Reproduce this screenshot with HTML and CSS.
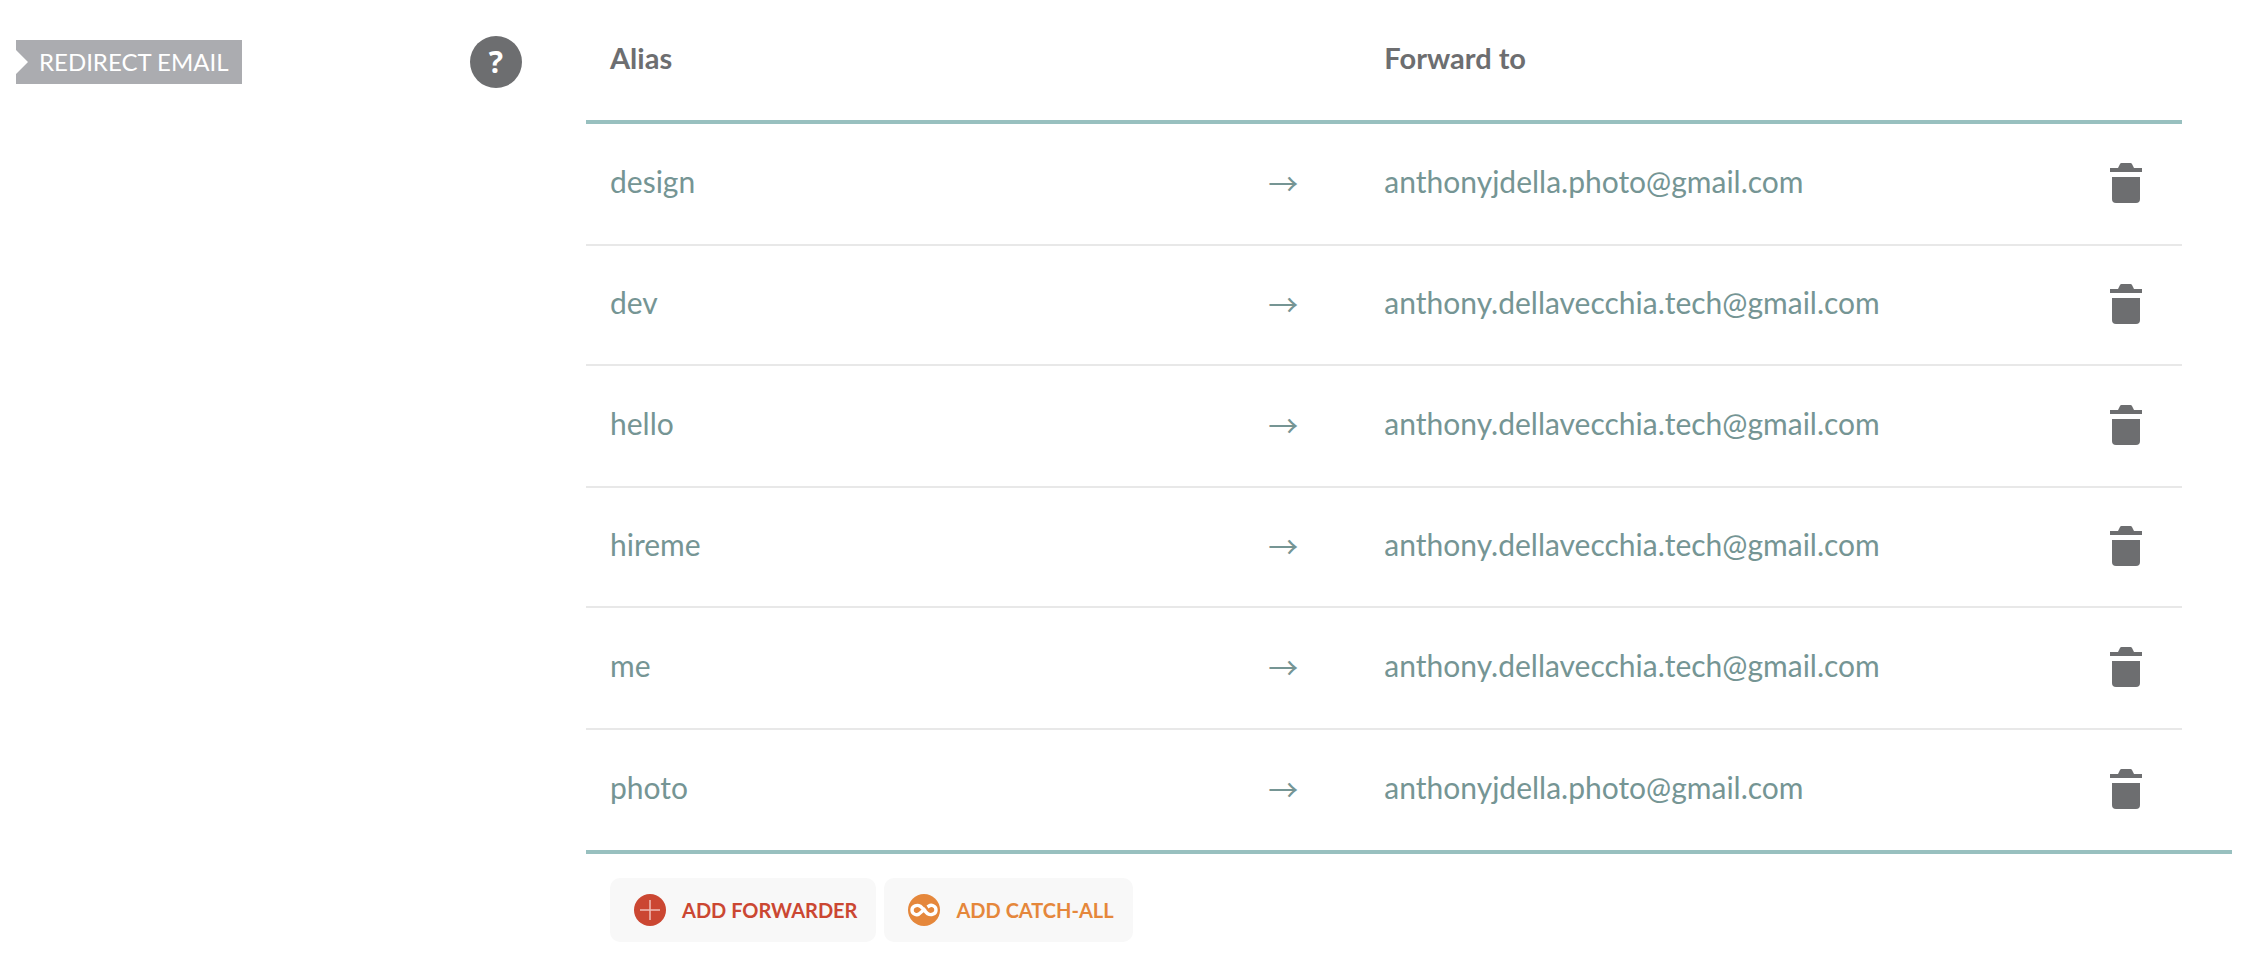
FILE: index.html
```html
<!DOCTYPE html>
<html lang="en">
<head>
<meta charset="utf-8">
<meta name="viewport" content="width=device-width, initial-scale=1">
<title>Redirect email</title>
<link rel="stylesheet" href="styles.css">
</head>
<body>
<svg class="sprite" aria-hidden="true">
  <symbol id="trash" viewBox="0 0 32 40">
    <path d="M0 5h8l2-4q.5-1 1.500-1h9q1 0 1.500 1l2 4h8v4H0z"/>
    <path d="M2 14h28v22q0 4-4 4H6q-4 0-4-4z"/>
  </symbol>
</svg>
<main class="page">
  <div class="side">
    <h2 class="tag">REDIRECT EMAIL</h2>
    <button class="help" type="button" aria-label="Help">?</button>
  </div>
  <section class="content">
    <table class="aliases">
      <thead>
        <tr><th class="col-alias">Alias</th><th class="col-arrow"></th><th class="col-target">Forward to</th><th class="col-remove"></th></tr>
      </thead>
      <tbody>
        <tr><td>design</td><td class="arrow">→</td><td>anthonyjdella.photo@gmail.com</td><td class="remove"><button class="trash" type="button" aria-label="Delete design"><svg><use href="#trash"/></svg></button></td></tr>
        <tr><td>dev</td><td class="arrow">→</td><td>anthony.dellavecchia.tech@gmail.com</td><td class="remove"><button class="trash" type="button" aria-label="Delete dev"><svg><use href="#trash"/></svg></button></td></tr>
        <tr><td>hello</td><td class="arrow">→</td><td>anthony.dellavecchia.tech@gmail.com</td><td class="remove"><button class="trash" type="button" aria-label="Delete hello"><svg><use href="#trash"/></svg></button></td></tr>
        <tr><td>hireme</td><td class="arrow">→</td><td>anthony.dellavecchia.tech@gmail.com</td><td class="remove"><button class="trash" type="button" aria-label="Delete hireme"><svg><use href="#trash"/></svg></button></td></tr>
        <tr><td>me</td><td class="arrow">→</td><td>anthony.dellavecchia.tech@gmail.com</td><td class="remove"><button class="trash" type="button" aria-label="Delete me"><svg><use href="#trash"/></svg></button></td></tr>
        <tr><td>photo</td><td class="arrow">→</td><td>anthonyjdella.photo@gmail.com</td><td class="remove"><button class="trash" type="button" aria-label="Delete photo"><svg><use href="#trash"/></svg></button></td></tr>
      </tbody>
    </table>
    <div class="actions">
      <button class="action action-forwarder" type="button">
        <svg viewBox="0 0 32 32" aria-hidden="true"><circle cx="16" cy="16" r="16" fill="#cb4732"/><path d="M16 6v20M6 16h20" stroke="#efc0b8" stroke-width="1.500" fill="none"/></svg>
        ADD FORWARDER
      </button>
      <button class="action action-catchall" type="button">
        <svg viewBox="0 0 32 32" aria-hidden="true"><circle cx="16" cy="16" r="16" fill="#e5873b"/><path d="M19.500 13L21 12C23 10.600 28 11.500 28 16S22.500 21.500 19.800 19.800C17.500 18 14.500 14 12.200 12.200C9.500 10.500 4 11.500 4 16S9 21.400 11 20L17.500 14.500" stroke="#fff" stroke-width="3.400" fill="none"/></svg>
        ADD CATCH-ALL
      </button>
    </div>
  </section>
</main>
</body>
</html>
```
FILE: styles.css
```css
* { box-sizing: border-box; }

body {
  margin: 0;
  background: #fff;
  color: #6d6e70;
  font-family: Lato, "Open Sans", sans-serif;
  font-size: 29px;
  line-height: 36px;
}

button {
  border: 0;
  padding: 0;
  font: inherit;
  cursor: pointer;
}

.sprite { position: absolute; width: 0; height: 0; }

.page {
  display: grid;
  grid-template-columns: 506px minmax(0, 1fr);
  column-gap: 64px;
  padding: 0 10px 24px 16px;
}

.side {
  display: flex;
  align-items: center;
  justify-content: space-between;
  align-self: start;
  padding-top: 36px;
}

.tag {
  margin: 0;
  padding: 0 14px 0 23px;
  background: #abacb0;
  clip-path: polygon(0 0, 100% 0, 100% 100%, 0 100%, 0 34px, 12px 22px, 0 10px);
  color: #fff;
  font-size: 24px;
  font-weight: 400;
  line-height: 44px;
}

.help {
  width: 52px;
  height: 52px;
  border-radius: 50%;
  background: #6d6e70;
  color: #fff;
  font-family: "Open Sans", sans-serif;
  font-size: 30px;
  font-weight: 700;
}

.aliases {
  width: calc(100% - 50px);
  border-collapse: separate;
  border-spacing: 0;
  table-layout: fixed;
}

.aliases th {
  height: 124px;
  padding: 0 24px 4px;
  border-bottom: 4px solid #98c0bf;
  font-weight: 700;
  text-align: left;
}

.aliases td {
  height: 120px;
  padding: 0 24px 6px;
  border-bottom: 2px solid #e8e8e8;
  color: #759594;
  font-size: 30px;
}

.aliases tr:nth-child(odd) td { height: 122px; }
.aliases tr:last-child td { border-bottom: 0; }

.col-alias { width: 41%; }
.col-arrow { width: 120px; }
.col-remove { width: 120px; }

.aliases .arrow { padding: 0 20px 4px 28px; font-family: "Noto Sans CJK JP", sans-serif; }
.aliases .remove { text-align: right; padding: 0 40px 4px 24px; }

.trash {
  display: inline-block;
  width: 32px;
  height: 40px;
  background: none;
  vertical-align: middle;
}

.trash svg { display: block; width: 32px; height: 40px; fill: #6d6e70; }

.actions {
  display: flex;
  gap: 8px;
  padding: 24px;
  border-top: 4px solid #98c0bf;
}

.action {
  display: flex;
  align-items: center;
  gap: 16px;
  height: 64px;
  padding: 0 19px 0 24px;
  border-radius: 10px;
  background: #f8f8f8;
  font-size: 20px;
  font-weight: 700;
}

.action svg { width: 32px; height: 32px; }
.action-forwarder { color: #cb4732; }
.action-catchall { color: #e5873b; }
```
